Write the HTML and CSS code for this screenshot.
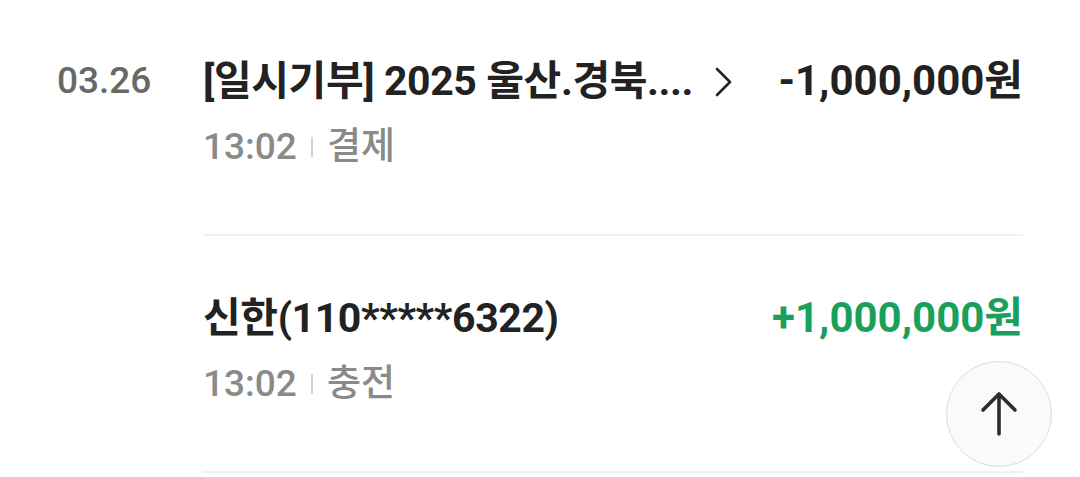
FILE: index.html
```html
<!DOCTYPE html>
<html lang="ko">

<head>
  <meta charset="utf-8">
  <title>거래내역</title>

  <link rel="stylesheet" href="styles.css">

</head>

<body>
    <div class="history">

        <div class="day">
            <div class="date">03.26</div>
            <div class="items">

                <div class="item">
                    <div class="main">
                        <div class="title">
                            <span class="name">[일시기부] 2025 울산.경북....</span>
                            <svg class="chevron" width="18" height="30" viewBox="0 0 18 30">
                                <polyline points="2,2 15,15 2,28" fill="none" stroke="#222" stroke-width="2.6" stroke-linecap="round" stroke-linejoin="round"/>
                            </svg>
                        </div>
                        <div class="amount">-1,000,000원</div>
                    </div>
                    <div class="sub">
                        <span>13:02</span>
                        <span class="bar"></span>
                        <span>결제</span>
                    </div>
                </div>

                <div class="item">
                    <div class="main">
                        <div class="title">
                            <span class="name">신한(110*****6322)</span>
                        </div>
                        <div class="amount plus">+1,000,000원</div>
                    </div>
                    <div class="sub">
                        <span>13:02</span>
                        <span class="bar"></span>
                        <span>충전</span>
                    </div>
                </div>

            </div>
        </div>

    </div>

    <button class="top-btn" type="button">
        <svg width="40" height="46" viewBox="0 0 40 46">
            <path d="M20 3 L20 43 M4 19 L20 3 L36 19" fill="none" stroke="#2a2c31" stroke-width="3.6" stroke-linecap="round" stroke-linejoin="round"/>
        </svg>
    </button>
</body>

</html>
```

FILE: styles.css
```css
body {
	margin: 0;
	background: #ffffff;
	font-family: Roboto, "Noto Sans CJK KR", sans-serif;
	color: #222222;
	overflow: hidden;
}

.history {
	padding: 0 57px;
	margin-top: -1px;
}

.day {
	display: flex;
}

.date {
	width: 146px;
	flex-shrink: 0;
	padding-top: 57px;
	font-size: 37px;
	font-weight: 500;
	line-height: 50px;
	color: #686868;
}

.items {
	flex: 1;
}

.item {
	padding: 57px 0 62px;
	border-bottom: 2px solid #f1f1f1;
}

.main {
	display: flex;
	justify-content: space-between;
	align-items: center;
	height: 50px;
}

.title {
	display: flex;
	align-items: center;
	gap: 22px;
}

.name {
	font-size: 41px;
	font-weight: 700;
	line-height: 50px;
	letter-spacing: -0.4px;
	color: #222222;
}

.chevron {
	margin-top: 2px;
}

.amount {
	font-size: 42px;
	font-weight: 700;
	line-height: 50px;
	color: #222222;
}

.amount.plus {
	color: #19a05b;
}

.sub {
	display: flex;
	align-items: center;
	gap: 14px;
	margin-top: 16px;
	font-size: 37px;
	font-weight: 500;
	line-height: 50px;
	color: #8a8a8a;
}

.sub .bar {
	width: 2px;
	height: 20px;
	background: #d2d2d2;
}

.top-btn {
	position: absolute;
	left: 946px;
	top: 361px;
	width: 106px;
	height: 106px;
	border-radius: 50%;
	border: 1.5px solid #dcdcdc;
	background: #fafafa;
	display: flex;
	align-items: center;
	justify-content: center;
	padding: 0;
}
```
